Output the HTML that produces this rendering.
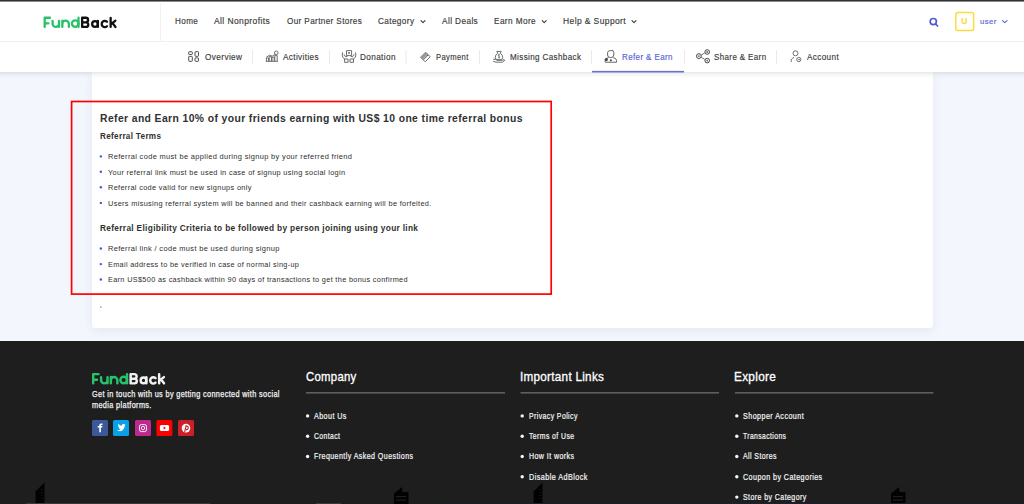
<!DOCTYPE html>
<html><head><meta charset="utf-8">
<style>
*{margin:0;padding:0;box-sizing:border-box}
html,body{width:1024px;height:504px;overflow:hidden;background:#f3f6fc;font-family:"Liberation Sans",sans-serif}
.t{position:absolute;white-space:nowrap;transform-origin:0 0}
.a{position:absolute}
svg{position:absolute;overflow:visible}
</style></head><body>
<!-- header -->
<div class="a" style="left:0;top:0;width:1024px;height:1px;background:#2e2f33"></div><div class="a" style="left:0;top:1px;width:1024px;height:1px;background:#8c8d90"></div>
<div class="a" style="left:0;top:2px;width:1024px;height:39px;background:#fff"></div>
<div class="a" style="left:0;top:41px;width:1024px;height:1px;background:#f1f1f1"></div>
<div class="a" style="left:160px;top:3px;width:1px;height:38px;background:#f1f1f1"></div>

<!-- logo -->
<svg id="logo1" width="1024" height="504" style="left:0;top:0" viewBox="0 0 1024 504">
<g fill="none" stroke-width="2.3" stroke-linecap="round" stroke-linejoin="round">
<g stroke="#27c26a">
<path d="M50.0 17.75H44.7V26.95M44.7 23.3H48.5"/>
<path d="M52.6 20.9V23.75A3.2 3.2 0 0 0 59 23.75M59 20.9V26.95"/>
<path d="M62.35 20.7V26.95M62.35 23.9A3.25 3.25 0 0 1 68.85 23.9V26.95"/>
<circle cx="75.2" cy="23.6" r="3.3"/>
<path d="M78.5 17.75V26.95"/>
</g>
<g stroke="#111">
<path d="M82.15 17.75V26.95H86A2.3 2.3 0 0 0 86 22.35H82.15M82.15 17.75H85.8A2.3 2.3 0 0 1 85.8 22.35"/>
<circle cx="95.0" cy="24.0" r="2.85"/>
<path d="M97.85 20.9V26.95"/>
<path d="M107.0 21.8A3.1 3.1 0 1 0 107.0 26.2"/>
<path d="M110.65 17.9V26.95M115.4 20.7L111.2 24.1M112.6 23.1L115.5 26.95"/>
</g>
</g>
</svg>

<!-- nav chevrons -->
<svg width="1024" height="504" style="left:0;top:0" viewBox="0 0 1024 504">
<g fill="none" stroke="#3a3a3a" stroke-width="1.1" stroke-linecap="round" stroke-linejoin="round">
<path d="M421 20.6L423 22.6L425 20.6"/>
<path d="M542.2 20.6L544.2 22.6L546.2 20.6"/>
<path d="M632 20.6L634 22.6L636 20.6"/>
</g>
<g fill="none" stroke="#5a67d8" stroke-width="1.1" stroke-linecap="round" stroke-linejoin="round">
<path d="M1002.5 20.6L1004.8 22.7L1007.1 20.6"/>
</g>
<g fill="none" stroke="#4f5bd5" stroke-width="1.7" stroke-linecap="round">
<circle cx="933.3" cy="21.6" r="3.1"/>
<path d="M935.6 24L937.6 26"/>
</g>
<rect x="955.8" y="12.6" width="17.8" height="17.8" rx="2" fill="none" stroke="#fddc3a" stroke-width="1.5"/>
</svg>

<!-- content card -->
<div class="a" style="left:92px;top:72px;width:841px;height:256px;background:#fff;border-radius:0 0 3px 3px;box-shadow:0 3px 10px rgba(60,80,140,.08)"></div>
<div class="a" style="left:0;top:72px;width:1024px;height:6px;background:linear-gradient(rgba(0,0,0,.09),rgba(0,0,0,.03) 50%,rgba(0,0,0,0))"></div>

<!-- subnav -->
<div class="a" style="left:0;top:42px;width:1024px;height:30px;background:#fff;"></div>

<svg width="1024" height="504" style="left:0;top:0" viewBox="0 0 1024 504">
<g fill="#e9e9e9">
<rect x="252" y="50" width="1" height="13.5"/>
<rect x="329" y="50" width="1" height="13.5"/>
<rect x="405.5" y="50" width="1" height="13.5"/>
<rect x="479" y="50" width="1" height="13.5"/>
<rect x="591" y="50" width="1" height="13.5"/>
<rect x="684" y="50" width="1" height="13.5"/>
<rect x="776" y="50" width="1" height="13.5"/>
</g>
<rect x="592" y="70.9" width="92" height="1.6" fill="#6670d4"/>
<!-- subnav icons -->
<g fill="none" stroke="#4a4a4a" stroke-width="1" stroke-linejoin="round">
<!-- overview -->
<rect x="188.7" y="51.7" width="3.6" height="2.8" rx="0.6"/>
<rect x="188.7" y="56.4" width="3.6" height="4.9" rx="0.6"/>
<rect x="195" y="51.7" width="3.5" height="4.6" rx="0.6"/>
<rect x="195" y="57.9" width="3.5" height="3.4" rx="0.6"/>
</g>
<g fill="none" stroke="#666" stroke-width="0.95" stroke-linejoin="round">
<!-- activities -->
<path d="M265.8 61.3H278M266.4 61.3V58H268.6V61.3M269.2 61.3V56.6H271.4V61.3M272 61.3V57.2H274.2V61.3M274.8 61.3V55.6H277.2V61.3M266.2 57.2L269.6 55.2L272.2 56.2L275.4 54.2"/>
<circle cx="276.3" cy="52.8" r="1.8"/>
<!-- donation -->
<path d="M346.5 50.6H351.6V55.6H346.5Z"/>
<path d="M342.6 52.4Q341.9 55 342.7 57.3L345 59.3M343.9 54.3L345.6 56.9L347.6 56"/>
<path d="M355.5 52.4Q356.2 55 355.4 57.3L353.1 59.3M354.2 54.3L352.5 56.9L350.5 56"/>
<rect x="344.6" y="59" width="3.5" height="3.3"/>
<rect x="350" y="59" width="3.5" height="3.3"/>
<!-- payment -->
<path d="M420.6 57.2L425.6 52.2L430.2 56.8L425.2 61.8Z"/>
<path d="M422 58.6L426.9 53.5M423.3 59.9L428.3 54.9"/>
<!-- missing cashback -->
<path d="M496.8 51.4H501.2L500.3 53.2Q502.8 54.8 502.8 57.8Q502.8 59.8 499 59.8Q495.2 59.8 495.2 57.8Q495.2 54.8 497.7 53.2Z"/>
<path d="M493.2 59.2Q495.3 58.8 497 60.3H502.2Q504.8 58.8 504.8 60.3L502.4 62.2H496.2L493.2 61.3"/>
<path d="M500 55Q499.6 54.4 498.9 54.5Q498 54.7 498.3 55.6Q498.6 56.2 499.3 56.4Q500.2 56.8 499.8 57.6Q499.2 58.2 498.2 57.6M499 53.8V58.4" stroke-width="0.7"/>
<!-- account -->
<circle cx="795.5" cy="53.3" r="2.5"/>
<path d="M794 57.5L792.5 58.3Q791.2 59 791.2 60.3V62"/>
<circle cx="798.8" cy="59.5" r="2.1"/>
<!-- share -->
<path d="M701.3 55L704.7 53M701.3 57.3L704.7 59.3"/>
</g>
<g fill="none" stroke="#444" stroke-width="1">
<circle cx="698.9" cy="56.1" r="2.4"/>
<circle cx="707.2" cy="52" r="2.3"/>
<circle cx="707.2" cy="60.6" r="2.3"/>
</g>
<path d="M420.6 57.2L425.6 52.2L427.9 54.5L422.9 59.5Z" fill="#9a9a9a"/>
<g fill="#666">
<path d="M348 52.2Q349 51.4 349.05 52.6Q349.1 51.4 350.1 52.2Q350.3 53.2 349.05 54.3Q347.8 53.2 348 52.2Z"/>
<circle cx="698.9" cy="56.1" r="0.9"/>
<circle cx="707.2" cy="52" r="0.9"/>
<circle cx="707.2" cy="60.6" r="0.9"/>
<circle cx="427.6" cy="55.4" r="0.7"/>
<circle cx="799" cy="59.5" r="0.8"/>
</g>
<!-- refer icon -->
<g fill="none" stroke="#555" stroke-width="0.9">
<path d="M607.6 52.6Q607.6 50.6 610.5 50.6H612.2L612.8 50M607.6 52.6V55Q607.6 57.6 610.7 57.6Q613.8 57.6 613.8 55V52.6Q613.8 50.6 612.2 50.6"/>
<path d="M605.2 62.2V60.5Q605.2 58.2 608.5 57.6M616.5 62.2V60.5Q616.5 58.2 613.2 57.6M605.2 62.2H616.5"/>
</g>
<g fill="#444">
<circle cx="606.3" cy="59.5" r="1.6"/>
<circle cx="610.9" cy="60.3" r="1"/>
</g>

<!-- content bullets -->
<g fill="#4d55d2">
<circle cx="100.85" cy="156.4" r="1.2"/>
<circle cx="100.85" cy="171.7" r="1.2"/>
<circle cx="100.85" cy="187.3" r="1.2"/>
<circle cx="100.85" cy="202.9" r="1.2"/>
<circle cx="100.85" cy="248.5" r="1.2"/>
<circle cx="100.85" cy="264.1" r="1.2"/>
<circle cx="100.85" cy="279.5" r="1.2"/>
</g>
<circle cx="100.8" cy="306.9" r="0.75" fill="#6d78b0"/>
</svg>

<svg width="1024" height="504" style="left:0;top:0" viewBox="0 0 1024 504"><rect x="71.6" y="101.5" width="479.6" height="192.6" fill="none" stroke="#ff0000" stroke-width="1.7"/></svg>

<!-- footer -->
<div class="a" style="left:0;top:340px;width:1024px;height:1px;background:#f8f8f8"></div>
<div class="a" style="left:0;top:341px;width:1024px;height:163px;background:#1e1e1e"></div>
<svg width="1024" height="504" style="left:0;top:0" viewBox="0 0 1024 504">
<!-- building silhouettes -->
<g fill="#020202">
<path d="M35.5 504V491.5L44.5 482.5V504Z"/>
<path d="M394 504V493.5L402 487L402.5 492H408.5V504Z"/>
<path d="M533.5 504V491.5L542.5 482.5V504Z"/>
<path d="M891 504V493.5L899 487L899.5 492H905.5V504Z"/>
</g>
<g fill="#1e1e1e">
<rect x="41.5" y="489" width="1" height="1"/><rect x="41.5" y="492" width="1" height="1"/><rect x="41.5" y="495" width="1" height="1"/><rect x="41.5" y="498" width="1" height="1"/>
<rect x="396" y="496" width="10" height="1.2"/><rect x="396" y="499.5" width="10" height="1.2"/>
<rect x="539.5" y="489" width="1" height="1"/><rect x="539.5" y="492" width="1" height="1"/><rect x="539.5" y="495" width="1" height="1"/><rect x="539.5" y="498" width="1" height="1"/>
<rect x="893" y="496" width="10" height="1.2"/><rect x="893" y="499.5" width="10" height="1.2"/>
</g>
<!-- footer logo -->
<g transform="translate(48.5 356.4)" fill="none" stroke-width="2.45" stroke-linecap="round" stroke-linejoin="round">
<g stroke="#27c26a">
<path d="M50.0 17.75H44.7V26.95M44.7 23.3H48.5"/>
<path d="M52.6 20.9V23.75A3.2 3.2 0 0 0 59 23.75M59 20.9V26.95"/>
<path d="M62.35 20.7V26.95M62.35 23.9A3.25 3.25 0 0 1 68.85 23.9V26.95"/>
<circle cx="75.2" cy="23.6" r="3.3"/>
<path d="M78.5 17.75V26.95"/>
</g>
<g stroke="#f2f2f2">
<path d="M82.15 17.75V26.95H86A2.3 2.3 0 0 0 86 22.35H82.15M82.15 17.75H85.8A2.3 2.3 0 0 1 85.8 22.35"/>
<circle cx="95.0" cy="24.0" r="2.85"/>
<path d="M97.85 20.9V26.95"/>
<path d="M107.0 21.8A3.1 3.1 0 1 0 107.0 26.2"/>
<path d="M110.65 17.9V26.95M115.4 20.7L111.2 24.1M112.6 23.1L115.5 26.95"/>
</g>
</g>
<!-- social -->
<rect x="92" y="420" width="16" height="16" rx="1.5" fill="#3b5998"/>
<rect x="113" y="420" width="16" height="16" rx="1.5" fill="#08a0e9"/>
<rect x="135" y="420" width="16" height="16" rx="1.5" fill="#bc2a8d"/>
<rect x="156.4" y="420" width="16" height="16" rx="1.5" fill="#ff0000"/>
<rect x="178" y="420" width="16" height="16" rx="1.5" fill="#cb2027"/>
<path d="M99.3 432.2V427.6H97.7V426H99.3V425Q99.3 423.4 101 423.4H102.5V424.9H101.6Q100.9 424.9 100.9 425.5V426H102.5L102.2 427.6H100.9V432.2Z" fill="#fff"/>
<g transform="translate(121.2 427.9) scale(0.78) translate(-122.15 -427.75)"><path d="M116.5 430.5Q119.5 431 121.5 429Q119.5 429 119 427.5Q119.8 427.5 120 427.3Q118.2 426.8 118 425Q118.6 425.3 119.2 425.3Q117.6 424 118.3 422.5Q120.3 424.8 123 425Q122.8 423 124.6 422.6Q125.7 422.5 126.3 423.2Q127 423 127.6 422.7Q127.3 423.5 126.7 423.9Q127.3 423.8 127.8 423.6Q127.3 424.3 126.8 424.7Q126.8 428.8 123.6 431Q120.3 433 116.5 430.5Z" fill="#fff"/></g>
<g fill="none" stroke="#fff" stroke-width="0.9">
<rect x="139.5" y="424.6" width="7" height="7" rx="1.9"/>
<circle cx="143" cy="428.1" r="1.7"/>
</g>
<circle cx="145" cy="426.1" r="0.45" fill="#fff"/>
<rect x="159.9" y="425.1" width="9.2" height="5.9" rx="1.5" fill="#fff"/>
<path d="M163.6 426.6V429.5L166 428.05Z" fill="#ff0000"/>
<circle cx="186" cy="428.1" r="4.3" fill="#fff"/>
<path d="M185.3 426Q188.2 425.5 188.2 427.8Q188.2 429.9 185.9 429.6M186 426.3L184.6 432" fill="none" stroke="#cb2027" stroke-width="1.1"/>
<!-- bottom row -->
<rect x="26" y="503" width="184" height="1" fill="#3a3a3a"/>
<rect x="316" y="503" width="25" height="1" fill="#3a3a3a"/>
<rect x="441" y="503" width="583" height="1" fill="#1b2030"/>
<!-- heading lines -->
<g fill="#5f5f5f">
<rect x="306" y="392" width="199" height="1.6"/>
<rect x="520.5" y="392" width="198.5" height="1.6"/>
<rect x="735" y="392" width="198.5" height="1.6"/>
</g>
<g fill="#f5f5f5">
<circle cx="307.6" cy="415.9" r="1.7"/><circle cx="307.6" cy="436.2" r="1.7"/><circle cx="307.6" cy="456.5" r="1.7"/>
<circle cx="522.2" cy="415.9" r="1.7"/><circle cx="522.2" cy="436.2" r="1.7"/><circle cx="522.2" cy="456.5" r="1.7"/><circle cx="522.2" cy="476.8" r="1.7"/>
<circle cx="736.8" cy="415.9" r="1.7"/><circle cx="736.8" cy="436.2" r="1.7"/><circle cx="736.8" cy="456.5" r="1.7"/><circle cx="736.8" cy="476.8" r="1.7"/><circle cx="736.8" cy="497.1" r="1.7"/>
</g>
</svg>
<div class="t" style="left:174.50px;top:16.89px;font-size:8.4px;line-height:8.4px;font-weight:400;color:#3a3a3a;transform:scaleX(0.9708);letter-spacing:0.4px;-webkit-text-stroke-width:0.15px">Home</div>
<div class="t" style="left:214.30px;top:16.89px;font-size:8.4px;line-height:8.4px;font-weight:400;color:#3a3a3a;transform:scaleX(1.0145);letter-spacing:0.4px;-webkit-text-stroke-width:0.15px">All Nonprofits</div>
<div class="t" style="left:286.60px;top:16.89px;font-size:8.4px;line-height:8.4px;font-weight:400;color:#3a3a3a;transform:scaleX(0.9701);letter-spacing:0.4px;-webkit-text-stroke-width:0.15px">Our Partner Stores</div>
<div class="t" style="left:377.90px;top:16.89px;font-size:8.4px;line-height:8.4px;font-weight:400;color:#3a3a3a;transform:scaleX(0.9784);letter-spacing:0.4px;-webkit-text-stroke-width:0.15px">Category</div>
<div class="t" style="left:441.80px;top:16.89px;font-size:8.4px;line-height:8.4px;font-weight:400;color:#3a3a3a;transform:scaleX(0.9861);letter-spacing:0.4px;-webkit-text-stroke-width:0.15px">All Deals</div>
<div class="t" style="left:494.00px;top:16.89px;font-size:8.4px;line-height:8.4px;font-weight:400;color:#3a3a3a;transform:scaleX(0.9833);letter-spacing:0.4px;-webkit-text-stroke-width:0.15px">Earn More</div>
<div class="t" style="left:563.20px;top:16.89px;font-size:8.4px;line-height:8.4px;font-weight:400;color:#3a3a3a;transform:scaleX(1.0113);letter-spacing:0.4px;-webkit-text-stroke-width:0.15px">Help &amp; Support</div>
<div class="t" style="left:979.70px;top:18.23px;font-size:8.0px;line-height:8.0px;font-weight:400;color:#5a64d0;transform:scaleX(0.9706);letter-spacing:0.4px;-webkit-text-stroke-width:0.15px">user</div>
<div class="t" style="left:961.30px;top:16.72px;font-size:8.6px;line-height:8.6px;font-weight:700;color:#fbd93a;transform:scaleX(1.0000);">U</div>
<div class="t" style="left:204.70px;top:52.89px;font-size:8.4px;line-height:8.4px;font-weight:400;color:#3a3a3a;transform:scaleX(0.9816);letter-spacing:0.4px;-webkit-text-stroke-width:0.15px">Overview</div>
<div class="t" style="left:283.10px;top:52.89px;font-size:8.4px;line-height:8.4px;font-weight:400;color:#3a3a3a;transform:scaleX(0.9703);letter-spacing:0.4px;-webkit-text-stroke-width:0.15px">Activities</div>
<div class="t" style="left:359.90px;top:52.89px;font-size:8.4px;line-height:8.4px;font-weight:400;color:#3a3a3a;transform:scaleX(0.9750);letter-spacing:0.4px;-webkit-text-stroke-width:0.15px">Donation</div>
<div class="t" style="left:436.00px;top:52.89px;font-size:8.4px;line-height:8.4px;font-weight:400;color:#3a3a3a;transform:scaleX(0.9111);letter-spacing:0.4px;-webkit-text-stroke-width:0.15px">Payment</div>
<div class="t" style="left:509.75px;top:52.89px;font-size:8.4px;line-height:8.4px;font-weight:400;color:#3a3a3a;transform:scaleX(0.9601);letter-spacing:0.4px;-webkit-text-stroke-width:0.15px">Missing Cashback</div>
<div class="t" style="left:622.00px;top:52.89px;font-size:8.4px;line-height:8.4px;font-weight:400;color:#5662d4;transform:scaleX(0.9566);letter-spacing:0.4px;-webkit-text-stroke-width:0.15px">Refer &amp; Earn</div>
<div class="t" style="left:713.70px;top:52.89px;font-size:8.4px;line-height:8.4px;font-weight:400;color:#3a3a3a;transform:scaleX(0.9527);letter-spacing:0.4px;-webkit-text-stroke-width:0.15px">Share &amp; Earn</div>
<div class="t" style="left:807.10px;top:52.89px;font-size:8.4px;line-height:8.4px;font-weight:400;color:#3a3a3a;transform:scaleX(0.9697);letter-spacing:0.4px;-webkit-text-stroke-width:0.15px">Account</div>
<div class="t" style="left:100.20px;top:113.03px;font-size:10.6px;line-height:10.6px;font-weight:700;color:#313131;transform:scaleX(0.9787);letter-spacing:0.4px">Refer and Earn 10% of your friends earning with US$ 10 one time referral bonus</div>
<div class="t" style="left:100.20px;top:132.21px;font-size:9.2px;line-height:9.2px;font-weight:700;color:#313131;transform:scaleX(0.8870);letter-spacing:0.35px">Referral Terms</div>
<div class="t" style="left:108.00px;top:153.48px;font-size:7.7px;line-height:7.7px;font-weight:400;color:#2e2e2e;transform:scaleX(0.9687);letter-spacing:0.35px">Referral code must be applied during signup by your referred friend</div>
<div class="t" style="left:108.00px;top:169.48px;font-size:7.7px;line-height:7.7px;font-weight:400;color:#2e2e2e;transform:scaleX(0.9560);letter-spacing:0.35px">Your referral link must be used in case of signup using social login</div>
<div class="t" style="left:108.00px;top:184.48px;font-size:7.7px;line-height:7.7px;font-weight:400;color:#2e2e2e;transform:scaleX(0.9560);letter-spacing:0.35px">Referral code valid for new signups only</div>
<div class="t" style="left:108.00px;top:200.48px;font-size:7.7px;line-height:7.7px;font-weight:400;color:#2e2e2e;transform:scaleX(0.9556);letter-spacing:0.35px">Users misusing referral system will be banned and their cashback earning will be forfeited.</div>
<div class="t" style="left:100.20px;top:224.21px;font-size:9.2px;line-height:9.2px;font-weight:700;color:#313131;transform:scaleX(0.9057);letter-spacing:0.35px">Referral Eligibility Criteria to be followed by person joining using your link</div>
<div class="t" style="left:108.00px;top:245.48px;font-size:7.7px;line-height:7.7px;font-weight:400;color:#2e2e2e;transform:scaleX(0.9689);letter-spacing:0.35px">Referral link / code must be used during signup</div>
<div class="t" style="left:108.00px;top:261.48px;font-size:7.7px;line-height:7.7px;font-weight:400;color:#2e2e2e;transform:scaleX(0.9475);letter-spacing:0.35px">Email address to be verified in case of normal sing-up</div>
<div class="t" style="left:108.00px;top:276.48px;font-size:7.7px;line-height:7.7px;font-weight:400;color:#2e2e2e;transform:scaleX(0.9505);letter-spacing:0.35px">Earn US$500 as cashback within 90 days of transactions to get the bonus confirmed</div>
<div class="t" style="left:92.00px;top:391.06px;font-size:8.2px;line-height:8.2px;font-weight:400;color:#f2f2f2;transform:scaleX(0.8900);letter-spacing:0.4px;-webkit-text-stroke-width:0.25px">Get in touch with us by getting connected with social</div>
<div class="t" style="left:92.00px;top:402.06px;font-size:8.2px;line-height:8.2px;font-weight:400;color:#f2f2f2;transform:scaleX(0.8924);letter-spacing:0.4px;-webkit-text-stroke-width:0.25px">media platforms.</div>
<div class="t" style="left:306.30px;top:370.50px;font-size:12.4px;line-height:12.4px;font-weight:400;color:#ffffff;transform:scaleX(0.9164);letter-spacing:0.3px;-webkit-text-stroke-width:0.3px">Company</div>
<div class="t" style="left:519.56px;top:370.50px;font-size:12.4px;line-height:12.4px;font-weight:400;color:#ffffff;transform:scaleX(0.9432);letter-spacing:0.3px;-webkit-text-stroke-width:0.3px">Important Links</div>
<div class="t" style="left:734.05px;top:370.50px;font-size:12.4px;line-height:12.4px;font-weight:400;color:#ffffff;transform:scaleX(0.9535);letter-spacing:0.3px;-webkit-text-stroke-width:0.3px">Explore</div>
<div class="t" style="left:314.20px;top:413.06px;font-size:8.2px;line-height:8.2px;font-weight:400;color:#f5f5f5;transform:scaleX(0.8703);letter-spacing:0.5px;-webkit-text-stroke-width:0.2px">About Us</div>
<div class="t" style="left:314.20px;top:433.06px;font-size:8.2px;line-height:8.2px;font-weight:400;color:#f5f5f5;transform:scaleX(0.8313);letter-spacing:0.5px;-webkit-text-stroke-width:0.2px">Contact</div>
<div class="t" style="left:314.20px;top:453.06px;font-size:8.2px;line-height:8.2px;font-weight:400;color:#f5f5f5;transform:scaleX(0.8626);letter-spacing:0.5px;-webkit-text-stroke-width:0.2px">Frequently Asked Questions</div>
<div class="t" style="left:528.60px;top:413.06px;font-size:8.2px;line-height:8.2px;font-weight:400;color:#f5f5f5;transform:scaleX(0.8414);letter-spacing:0.5px;-webkit-text-stroke-width:0.2px">Privacy Policy</div>
<div class="t" style="left:528.60px;top:433.06px;font-size:8.2px;line-height:8.2px;font-weight:400;color:#f5f5f5;transform:scaleX(0.8389);letter-spacing:0.5px;-webkit-text-stroke-width:0.2px">Terms of Use</div>
<div class="t" style="left:528.60px;top:453.06px;font-size:8.2px;line-height:8.2px;font-weight:400;color:#f5f5f5;transform:scaleX(0.8604);letter-spacing:0.5px;-webkit-text-stroke-width:0.2px">How It works</div>
<div class="t" style="left:528.60px;top:474.06px;font-size:8.2px;line-height:8.2px;font-weight:400;color:#f5f5f5;transform:scaleX(0.8833);letter-spacing:0.5px;-webkit-text-stroke-width:0.2px">Disable AdBlock</div>
<div class="t" style="left:743.20px;top:413.06px;font-size:8.2px;line-height:8.2px;font-weight:400;color:#f5f5f5;transform:scaleX(0.8743);letter-spacing:0.5px;-webkit-text-stroke-width:0.2px">Shopper Account</div>
<div class="t" style="left:743.20px;top:433.06px;font-size:8.2px;line-height:8.2px;font-weight:400;color:#f5f5f5;transform:scaleX(0.8250);letter-spacing:0.5px;-webkit-text-stroke-width:0.2px">Transactions</div>
<div class="t" style="left:743.20px;top:453.06px;font-size:8.2px;line-height:8.2px;font-weight:400;color:#f5f5f5;transform:scaleX(0.8475);letter-spacing:0.5px;-webkit-text-stroke-width:0.2px">All Stores</div>
<div class="t" style="left:743.20px;top:474.06px;font-size:8.2px;line-height:8.2px;font-weight:400;color:#f5f5f5;transform:scaleX(0.8703);letter-spacing:0.5px;-webkit-text-stroke-width:0.2px">Coupon by Categories</div>
<div class="t" style="left:743.20px;top:494.06px;font-size:8.2px;line-height:8.2px;font-weight:400;color:#f5f5f5;transform:scaleX(0.8547);letter-spacing:0.5px;-webkit-text-stroke-width:0.2px">Store by Category</div>
</body></html>
